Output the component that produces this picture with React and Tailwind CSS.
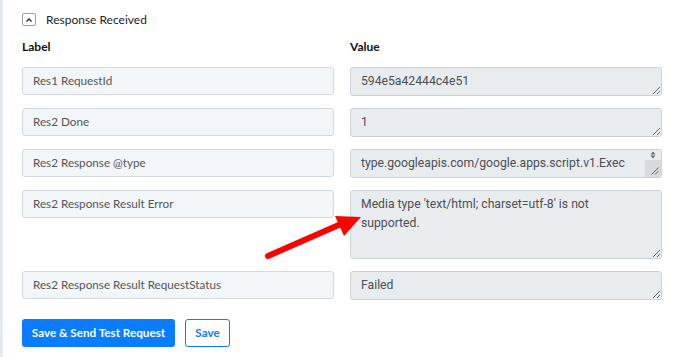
import React from 'react';

const rows = [
  { label: 'Res1 RequestId', value: '594e5a42444c4e51', h: 'h-[29px]' },
  { label: 'Res2 Done', value: '1', h: 'h-[29px]' },
  { label: 'Res2 Response @type', value: 'type.googleapis.com/google.apps.script.v1.Exec', h: 'h-[29px]', scroll: true },
  { label: 'Res2 Response Result Error', value: "Media type 'text/html; charset=utf-8' is not supported.", h: 'h-[69px]' },
  { label: 'Res2 Response Result RequestStatus', value: 'Failed', h: 'h-[29px]' },
];

const App = () => {
  return (
    <div className="relative w-[683px] h-[357px] bg-white overflow-hidden border-l-[3px] border-[#e6eaf3] font-['Lato',sans-serif]">
      <div className="pl-[19px] pr-[21px] pt-[13px]">
        {/* section header */}
        <div className="flex items-center h-[13px]">
          <div className="w-[14px] h-[13px] border border-[#9aa3ad] rounded-[2px] flex items-center justify-center">
            <svg width="8" height="6" viewBox="0 0 8 6">
              <path d="M1.5 4.5 L4 2 L6.5 4.5" fill="none" stroke="#222" strokeWidth="1.4" />
            </svg>
          </div>
          <span className="ml-[10px] text-[12px] text-[#222]">Response Received</span>
        </div>

        <div className="flex gap-[16px] mt-[12px]">
          <div className="w-[312px] text-[12px] font-bold text-[#111]">Label</div>
          <div className="w-[312px] text-[12px] font-bold text-[#111]">Value</div>
        </div>

        <div className="mt-[11px] flex flex-col gap-[12px]">
          {rows.map((row) => (
            <div key={row.label} className="flex gap-[16px] items-start">
              <div className="w-[312px] h-[28px] bg-[#f3f6f9] border border-[#d3d8de] rounded-[3px] px-[10px] flex items-center text-[11.7px] text-[#555]">
                {row.label}
              </div>
              <div className="relative w-[312px]">
                <textarea
                  readOnly
                  defaultValue={row.value}
                  className={`block w-[312px] ${row.h} bg-[#e9ecef] border border-[#cdd2d8] rounded-[3px] pl-[10px] pr-[24px] pt-[4px] text-[12.2px] leading-[19px] text-[#4a4f55] font-['Roboto',sans-serif] resize-y outline-none overflow-hidden`}
                />
                {row.scroll && (
                  <div className="absolute right-[1px] top-[1px] bottom-[1px] w-[16px] flex flex-col pointer-events-none">
                    <div className="h-[10px] flex items-center justify-center">
                      <svg width="6" height="8" viewBox="0 0 6 8">
                        <path d="M3 0.5 L5.5 3.5 H0.5 Z M3 7.5 L5.5 4.5 H0.5 Z" fill="#6b6b6b" />
                      </svg>
                    </div>
                    <div className="flex-1 bg-[#d9dadb] relative">
                      <svg className="absolute right-[2px] bottom-[2px]" width="8" height="8" viewBox="0 0 8 8">
                        <path d="M7.5 0.5 L0.5 7.5 M7.5 4 L4 7.5" stroke="#555" strokeWidth="0.9" />
                      </svg>
                    </div>
                  </div>
                )}
              </div>
            </div>
          ))}
        </div>

        <div className="flex gap-[10px] mt-[19px]">
          <button className="h-[28px] w-[153px] bg-[#0a7cff] rounded-[3px] text-white text-[11.7px] font-bold">
            Save &amp; Send Test Request
          </button>
          <button className="h-[28px] w-[45px] border border-[#0a7cff] rounded-[3px] text-[#0a7cff] text-[11.7px] font-bold bg-white">
            Save
          </button>
        </div>
      </div>

      {/* annotation arrow */}
      <svg className="absolute left-0 top-0 pointer-events-none" width="683" height="357">
        <line x1="265" y1="256" x2="338" y2="224" stroke="#ff0000" strokeWidth="6" strokeLinecap="round" />
        <polygon points="358,217 332,216 341,236" fill="#ff0000" />
      </svg>
    </div>
  );
};

export default App;
